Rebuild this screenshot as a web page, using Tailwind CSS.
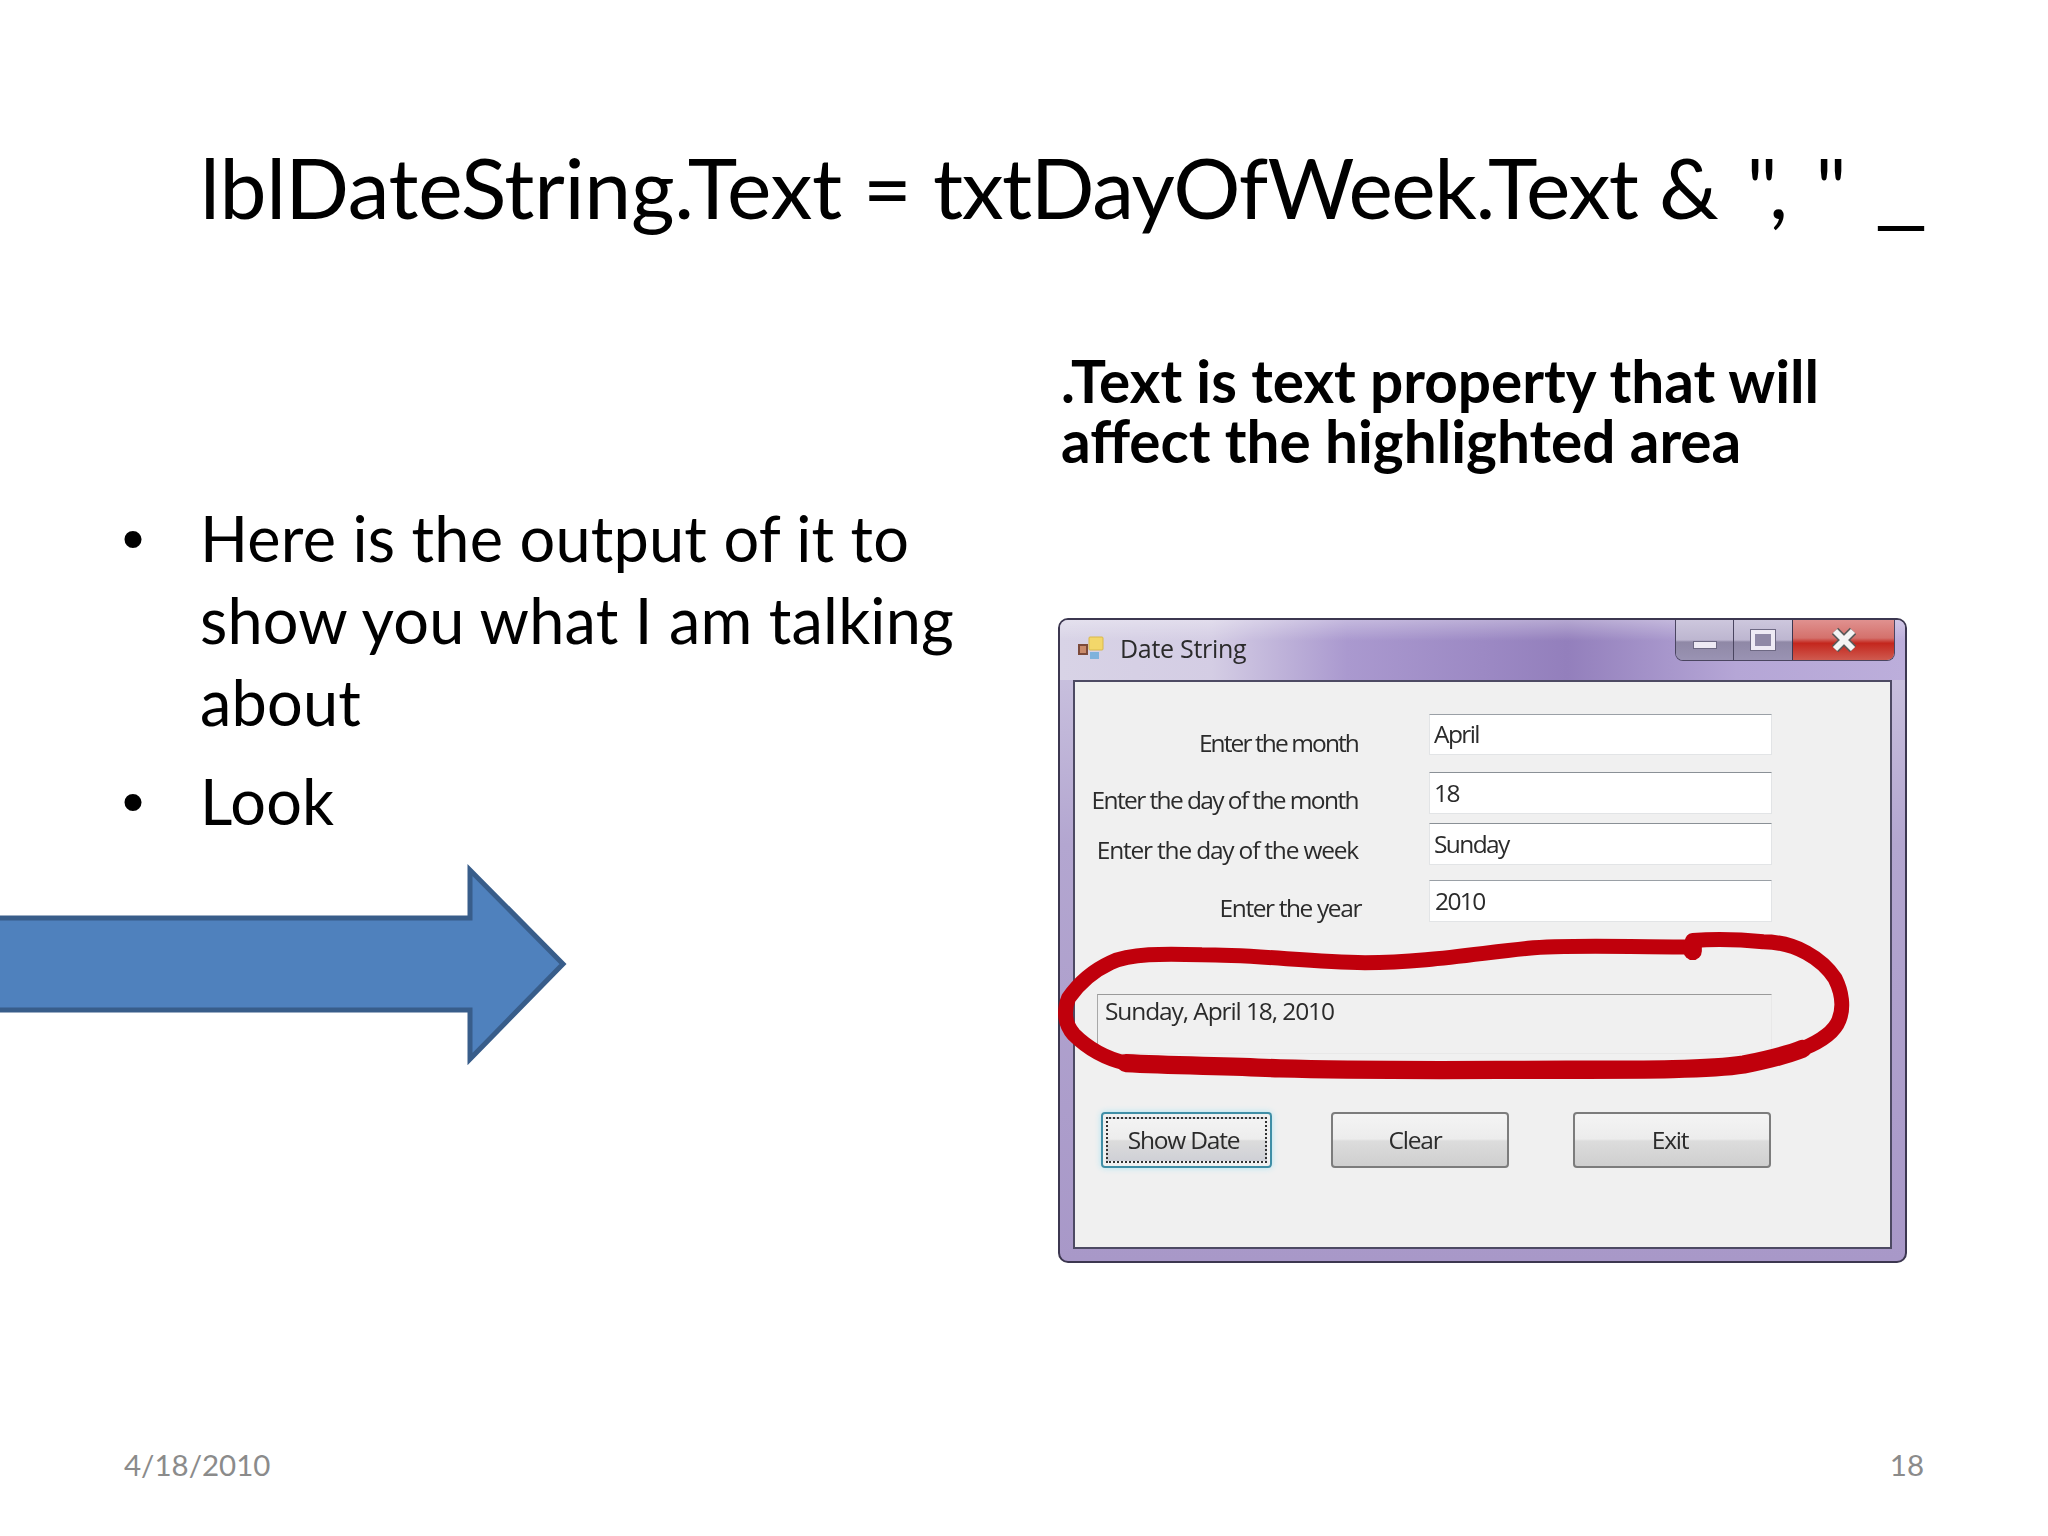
<!DOCTYPE html>
<html lang="en">
<head>
    <meta charset="UTF-8">
    <title>lblDateString.Text</title>
    <script src="https://cdn.jsdelivr.net/npm/@tailwindcss/browser@4"></script>
</head>
<body class="w-[2048px] h-[1536px] bg-white text-black font-[Lato,sans-serif] flex flex-col overflow-hidden">

    <header class="pl-[200px] pt-[139px] h-[235px]">
        <h1 class="text-[84px] leading-[96px] whitespace-nowrap"><span class="tracking-[-0.3px]">lblDateString.Text =</span> <span class="tracking-[-1.4px]">txtDayOfWeek.Text</span> <span class="[word-spacing:6px]">&amp; ", " <span class="inline-block origin-left scale-x-[1.4]">_</span></span></h1>
    </header>

    <main class="flex flex-1">
        <section class="w-[1058px] shrink-0 pt-[262px]">
            <ul class="pl-[122px] text-[63px] leading-[82px] tracking-[0.2px]">
                <li class="flex">
                    <span class="w-[78px] shrink-0 font-['Liberation_Sans',sans-serif]">•</span>
                    <span class="w-[790px]">Here is the output of it to show you what I am talking about</span>
                </li>
                <li class="flex mt-[17px]">
                    <span class="w-[78px] shrink-0 font-['Liberation_Sans',sans-serif]">•</span>
                    <span>Look</span>
                </li>
            </ul>
            <svg class="mt-[12px] block" width="580" height="225" viewBox="0 0 580 225">
                <path d="M-10 64H470V16L563 110L470 205V156H-10Z" fill="#4f81bd" stroke="#385d8a" stroke-width="5"/>
            </svg>
        </section>

        <section class="flex-1 pt-[115px]">
            <h2 class="pl-[3px] text-[58.5px] leading-[60px] font-bold whitespace-nowrap">
                <span class="block h-[60px]">.Text is text property that will</span>
                <span class="block h-[60px]">affect the highlighted area</span>
            </h2>

            <div class="relative mt-[148px] w-[849px] h-[645px] rounded-[10px] border-2 border-[#3c3750] flex flex-col bg-[linear-gradient(180deg,#cfc8e2_0%,#b3a6d0_35%,#a898c8_100%)] font-['Open_Sans',sans-serif] text-[#2b2b2b]">
                <div class="h-[60px] flex items-start justify-between rounded-t-[8px] bg-[linear-gradient(180deg,#ffffff50_0%,#ffffff00_35%),linear-gradient(90deg,#d8d3e6_0%,#d4cde4_18%,#aa99cf_34%,#9c89c4_50%,#937fbc_60%,#b5a6d6_80%,#bcaedb_100%)]">
                    <div class="flex items-center gap-[14px] pl-[18px] pt-[12px]">
                        <svg width="28" height="28" viewBox="0 0 28 28">
                            <rect x="1" y="11" width="8" height="9" fill="#c98a6a" stroke="#7c4a3a" stroke-width="2"/>
                            <rect x="11" y="3" width="14" height="13" rx="1" fill="#f3d76a" stroke="#d9b84a"/>
                            <rect x="12" y="18" width="9" height="7" fill="#7fb2dc"/>
                        </svg>
                        <span class="text-[25px] leading-[32px] tracking-[-0.3px] blur-[0.4px]">Date String</span>
                    </div>
                    <div class="flex mr-[10px] h-[41px] w-[220px] rounded-b-[8px] border border-t-0 border-[#4a4560] overflow-hidden">
                        <div class="w-[58px] flex items-center justify-center border-r border-[#4a4560] bg-[linear-gradient(180deg,#cdc7dd_0%,#bdb6d0_50%,#8f88a6_55%,#9a93b3_100%)]">
                            <span class="block w-[24px] h-[8px] mt-[10px] bg-[#eeeaf4] border border-[#6d6883]"></span>
                        </div>
                        <div class="w-[59px] flex items-center justify-center border-r border-[#3c3750] bg-[linear-gradient(180deg,#cdc7dd_0%,#bdb6d0_50%,#8f88a6_55%,#9a93b3_100%)]">
                            <span class="block w-[24px] h-[20px] border-[4px] border-[#eeeaf4] outline outline-1 outline-[#6d6883] bg-[#8f88a6]"></span>
                        </div>
                        <div class="flex-1 flex items-center justify-center bg-[linear-gradient(180deg,#e0918f_0%,#d4716c_45%,#c4261d_58%,#cf5a4f_100%)]">
                            <svg width="32" height="26" viewBox="0 0 32 26">
                                <path d="M7 4L25 22M25 4L7 22" stroke="#5a5a5a" stroke-width="9"/>
                                <path d="M7 4L25 22M25 4L7 22" stroke="#f4f4f4" stroke-width="6"/>
                            </svg>
                        </div>
                    </div>
                </div>

                <div class="mx-[13px] h-[569px] border-2 border-[#4d4a63] bg-[#f0f0f0] pt-[32px]">
                    <div class="grid grid-cols-[283px_343px] gap-x-[71px] text-[24.5px] tracking-[-1.6px] blur-[0.4px]">
                        <div class="pt-[18px] h-[41px] flex items-center justify-end tracking-[-1.9px]">Enter the month</div>
                        <div class="h-[41px] bg-white border border-[#e2e4e6] border-t-[#9aa0a6] px-[4px] flex items-center">April</div>
                        <div class="mt-[17px] pt-[14px] h-[42px] flex items-center justify-end">Enter the day of the month</div>
                        <div class="mt-[17px] h-[42px] bg-white border border-[#e2e4e6] border-t-[#8a9096] px-[4px] flex items-center">18</div>
                        <div class="mt-[9px] pt-[12px] h-[42px] flex items-center justify-end tracking-[-1.2px]">Enter the day of the week</div>
                        <div class="mt-[9px] h-[42px] bg-white border border-[#e2e4e6] border-t-[#8a9096] px-[4px] flex items-center">Sunday</div>
                        <div class="mt-[15px] pt-[14px] h-[42px] -mr-[3px] flex items-center justify-end tracking-[-1.4px]">Enter the year</div>
                        <div class="mt-[15px] h-[42px] bg-white border border-[#e2e4e6] border-t-[#9aa0a6] px-[5px] flex items-center">2010</div>
                    </div>

                    <div class="mt-[72px] ml-[22px] w-[675px] h-[60px] border border-[#e8e8e8] border-t-[#9a9a9a] border-l-[#a8a8a8] px-[7px] text-[24.5px] leading-[32px] tracking-[-1.1px] blur-[0.4px]">Sunday, April 18, 2010</div>

                    <div class="mt-[58px] ml-[26px] flex text-[24.5px] tracking-[-1.2px]">
                        <button class="w-[171px] h-[56px] rounded-[4px] border-2 border-[#3f8ea6] p-[3px] shadow-[0_0_6px_#aee4f2]">
                            <span class="flex h-full items-center justify-center pr-[6px] border-2 border-dotted border-[#333] bg-[linear-gradient(180deg,#f3f3f3_0%,#ededed_48%,#dcdcdc_52%,#cfd0d6_100%)] blur-[0.3px]">Show Date</span>
                        </button>
                        <button class="ml-[59px] w-[178px] h-[56px] pr-[10px] rounded-[4px] border-2 border-[#7c7c7c] bg-[linear-gradient(180deg,#f4f4f4_0%,#ececec_48%,#dcdcdc_52%,#cfcfcf_100%)]"><span class="blur-[0.3px]">Clear</span></button>
                        <button class="ml-[64px] w-[198px] h-[56px] pr-[4px] rounded-[4px] border-2 border-[#7c7c7c] bg-[linear-gradient(180deg,#f4f4f4_0%,#ececec_48%,#dcdcdc_52%,#cfcfcf_100%)]"><span class="blur-[0.3px]">Exit</span></button>
                    </div>
                </div>

                <!-- hand drawn marker round the output label -->
                <svg class="absolute -left-[2px] -top-[2px] pointer-events-none" width="849" height="645" viewBox="810 474 650 494">
                    <g fill="none" stroke="#c0000c" stroke-linecap="round" stroke-linejoin="round">
                        <path stroke-width="11.5" d="M1296 726C1240 726 1200 724 1170 727C1130 731 1090 738 1045 738C1000 737 960 732 920 732C890 731 865 731 850 738C835 745 825 755 818 765C814 775 815 785 822 793C832 803 845 811 862 815"/>
                        <path stroke-width="14" d="M862 815C900 817 940 817 980 819C1050 821 1130 820 1200 820C1260 820 1310 820 1335 816C1350 813 1365 810 1380 804"/>
                        <path stroke-width="11.5" d="M1380 804C1395 798 1405 790 1408 782C1412 772 1410 760 1405 750C1395 735 1375 722 1350 722C1330 720 1310 720 1296 721"/>
                        <path stroke-width="14" d="M1296 724V729"/>
                    </g>
                </svg>
            </div>
        </section>
    </main>

    <footer class="flex justify-between pl-[124px] pr-[124px] pb-[51px] text-[29.5px] leading-[40px] text-[#8b8b8b]">
        <span>4/18/2010</span>
        <span>18</span>
    </footer>
</body>
</html>
